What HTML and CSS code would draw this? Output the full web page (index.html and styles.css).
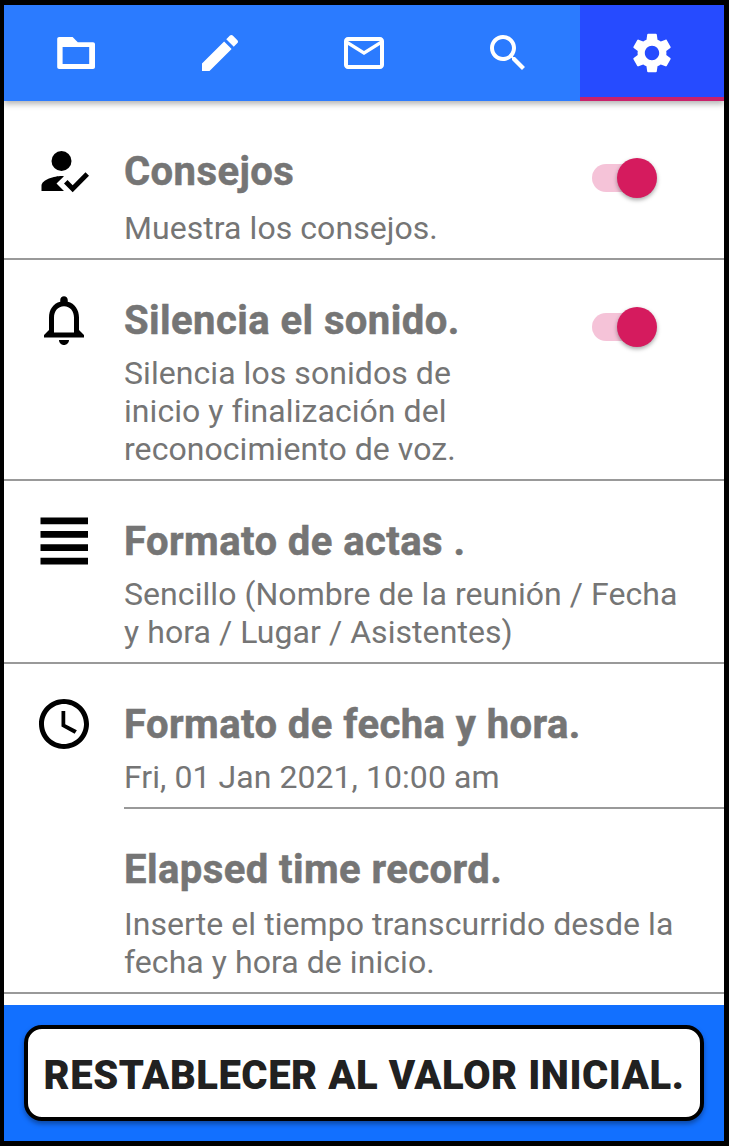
FILE: index.html
```html
<!DOCTYPE html>
<html lang="es">
<head>
<meta charset="UTF-8">
<meta name="viewport" content="width=device-width, initial-scale=1.0">
<title>Ajustes</title>
<link rel="stylesheet" href="styles.css">
</head>
<body>
    <nav class="tabs">
        <a class="tab"><svg viewBox="0 0 24 24"><path fill-rule="evenodd" d="M3.6 4h6.7l2.6 2.6h7.600c.6 0 1 .4 1 1V19c0 .6-.4 1-1 1H3.6c-.6 0-1-.4-1-1V5c0-.6.4-1 1-1zM5.3 9v8.5h13.3V9z"/></svg></a>
        <a class="tab"><svg viewBox="0 0 24 24"><path d="M3 17.25V21h3.75L17.81 9.94l-3.75-3.75L3 17.25zM20.71 7.04c.39-.39.39-1.02 0-1.41l-2.34-2.34c-.39-.39-1.02-.39-1.41 0l-1.83 1.83 3.75 3.75 1.83-1.83z"/></svg></a>
        <a class="tab"><svg viewBox="0 0 24 24"><path d="M20 4H4c-1.1 0-2 .9-2 2v12c0 1.1.9 2 2 2h16c1.1 0 2-.9 2-2V6c0-1.1-.9-2-2-2zm0 14H4V8l8 5 8-5v10zm-8-7L4 6h16l-8 5z"/></svg></a>
        <a class="tab"><svg viewBox="0 0 24 24"><path d="M15.5 14h-.79l-.28-.27C15.41 12.59 16 11.11 16 9.5 16 5.91 13.09 3 9.5 3S3 5.91 3 9.5 5.91 16 9.5 16c1.61 0 3.09-.59 4.23-1.57l.27.28v.79l5 4.99L20.49 19l-4.99-5zm-6 0C7.01 14 5 11.99 5 9.5S7.01 5 9.5 5 14 7.01 14 9.5 11.99 14 9.5 14z"/></svg></a>
        <a class="tab active"><svg viewBox="0 0 24 24"><path d="M19.14 12.94c.04-.3.06-.61.06-.94 0-.32-.02-.64-.07-.94l2.03-1.58c.18-.14.23-.41.12-.61l-1.92-3.32c-.12-.22-.37-.29-.59-.22l-2.39.96c-.5-.38-1.03-.7-1.62-.94l-.36-2.54c-.04-.24-.24-.41-.48-.41h-3.84c-.24 0-.43.17-.47.41l-.36 2.54c-.59.24-1.13.57-1.62.94l-2.39-.96c-.22-.08-.47 0-.59.22L2.74 8.87c-.12.21-.08.47.12.61l2.03 1.58c-.05.3-.09.63-.09.94s.02.64.07.94l-2.03 1.58c-.18.14-.23.41-.12.61l1.92 3.32c.12.22.37.29.59.22l2.39-.96c.5.38 1.03.7 1.62.94l.36 2.54c.05.24.24.41.48.41h3.84c.24 0 .44-.17.47-.41l.36-2.54c.59-.24 1.13-.56 1.62-.94l2.39.96c.22.08.47 0 .59-.22l1.92-3.32c.12-.22.07-.47-.12-.61l-2.01-1.58zM12 15.6c-1.98 0-3.6-1.62-3.6-3.6s1.62-3.6 3.6-3.6 3.6 1.62 3.6 3.6-1.62 3.6-3.6 3.6z"/></svg></a>
    </nav>

    <main class="settings">
        <div class="row first">
            <svg class="icon" viewBox="0 0 24 24"><path d="M9 17l3-2.94c-.39-.04-.68-.06-1-.06-2.67 0-8 1.34-8 4v2h9l-3-3z"/><circle cx="11" cy="8" r="4"/><path d="M15.47 20.5L12 17l1.4-1.41 2.07 2.08 5.13-5.17 1.4 1.41z"/></svg>
            <div class="text">
                <h2>Consejos</h2>
                <p>Muestra los consejos.</p>
            </div>
            <span class="switch"></span>
        </div>

        <div class="row">
            <svg class="icon" viewBox="0 0 24 24"><path d="M12 22c1.1 0 2-.9 2-2h-4c0 1.1.9 2 2 2zm6-6v-5c0-3.07-1.63-5.64-4.5-6.32V4c0-.83-.67-1.5-1.5-1.5s-1.5.67-1.5 1.5v.68C7.64 5.36 6 7.92 6 11v5l-2 2v1h16v-1l-2-2zm-2 1H8v-6c0-2.48 1.51-4.5 4-4.5s4 2.02 4 4.5v6z"/></svg>
            <div class="text">
                <h2>Silencia el sonido.</h2>
                <p>Silencia los sonidos de inicio y finalización del reconocimiento de voz.</p>
            </div>
            <span class="switch"></span>
        </div>

        <div class="row">
            <svg class="icon" viewBox="0 0 24 24"><path d="M2.6 2.6h19v2.7h-19zM2.6 7.95h19v2.7h-19zM2.6 13.3h19V16h-19zM2.6 18.7h19v2.7h-19z"/></svg>
            <div class="text">
                <h2>Formato de actas .</h2>
                <p>Sencillo (Nombre de la reunión / Fecha y hora / Lugar / Asistentes)</p>
            </div>
        </div>

        <div class="row group">
            <svg class="icon" viewBox="0 0 24 24"><path d="M11.99 2C6.47 2 2 6.48 2 12s4.47 10 9.99 10C17.52 22 22 17.52 22 12S17.52 2 11.99 2zM12 20c-4.42 0-8-3.58-8-8s3.58-8 8-8 8 3.58 8 8-3.58 8-8 8zM12.5 6.8H11V13l5.25 2.9.9-1.4-4.65-2.4z"/></svg>
            <div class="items">
                <div class="text">
                    <h2>Formato de fecha y hora.</h2>
                    <p>Fri, 01 Jan 2021, 10:00 am</p>
                </div>
                <div class="text elapsed">
                    <h2>Elapsed time record.</h2>
                    <p>Inserte el tiempo transcurrido desde la fecha y hora de inicio.</p>
                </div>
            </div>
        </div>
    </main>

    <footer class="footer">
        <button class="reset">RESTABLECER AL VALOR INICIAL.</button>
    </footer>
</body>
</html>
```
FILE: styles.css
```css
* {
    box-sizing: border-box;
}

body {
    display: flex;
    flex-direction: column;
    width: 729px;
    height: 1146px;
    margin: 0;
    border: solid #000;
    border-width: 5px 5px 5px 4px;
    background-color: #fff;
    font-family: Roboto, sans-serif;
    color: #757575;
    overflow: hidden;
}

.tabs {
    display: flex;
    height: 96px;
    flex-shrink: 0;
    background-color: #2b7bff;
    box-shadow: 0 3px 6px rgba(0, 0, 0, 0.3);
}

.tab {
    flex: 1;
    display: flex;
    justify-content: center;
    align-items: center;
}

.tab svg {
    width: 48px;
    height: 48px;
    fill: #fff;
}

.tab.active {
    background-color: #264bff;
    box-shadow: inset 0 -4px #c9216b;
}

.settings {
    flex: 1;
}

.row {
    display: flex;
    align-items: flex-start;
    padding: 30px 0 11px 30px;
    border-bottom: 2px solid #999;
}

.row.first {
    padding-top: 40px;
}

.icon {
    width: 60px;
    height: 60px;
    margin-right: 30px;
    flex-shrink: 0;
}

.text {
    flex: 1;
    padding-top: 7px;
}

h2 {
    margin: 0 0 10px;
    font-size: 40px;
    line-height: 47px;
    font-weight: bold;
    letter-spacing: 0.43px;
    -webkit-text-stroke: 0.5px #757575;
}

p {
    max-width: 570px;
    margin: 0;
    font-size: 32px;
    line-height: 38px;
    letter-spacing: 0.06px;
}

.first h2 {
    margin-bottom: 14px;
}

.row:has(.switch) p {
    max-width: 380px;
}

.switch {
    display: flex;
    justify-content: flex-end;
    align-items: center;
    width: 65px;
    height: 28px;
    margin: 23px 67px 0 0;
    border-radius: 14px;
    background: linear-gradient(to right, #f5c3d8 50px, transparent 50px);
}

.switch::after {
    content: "";
    width: 40px;
    height: 40px;
    flex-shrink: 0;
    border-radius: 50%;
    background-color: #d51b5e;
    box-shadow: 0 2px 4px rgba(0, 0, 0, 0.35);
}

/* Dos ajustes comparten el mismo icono */
.row.group {
    padding-bottom: 0;
}

.items {
    flex: 1;
}

.items .text {
    padding-bottom: 11px;
}

.items .elapsed {
    padding-top: 37px;
    border-top: 2px solid #999;
}

.elapsed h2 {
    margin-bottom: 12px;
}

.footer {
    height: 136px;
    flex-shrink: 0;
    padding: 20px;
    background-color: #1270ff;
}

.reset {
    width: 680px;
    height: 96px;
    padding: 4px 0 0;
    border: 4px solid #000;
    border-radius: 18px;
    background-color: #fff;
    box-shadow: 0 3px 5px rgba(0, 0, 0, 0.35);
    font: 900 40px Roboto, sans-serif;
    color: #212121;
    letter-spacing: 0.53px;
    white-space: nowrap;
}
```
